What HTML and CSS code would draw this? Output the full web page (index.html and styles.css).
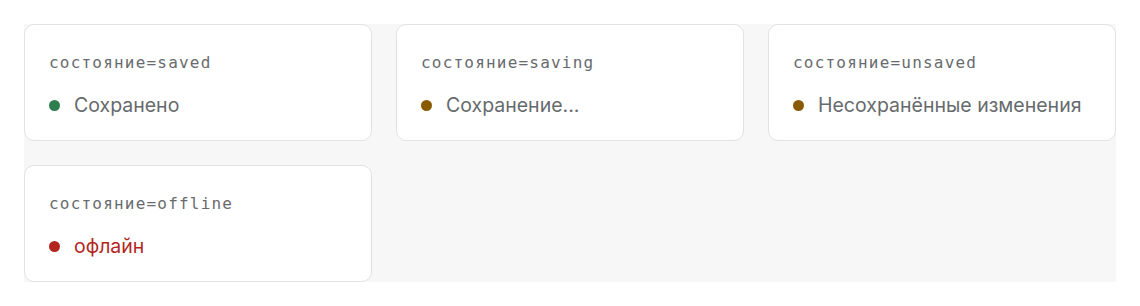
FILE: index.html
```html
<!DOCTYPE html>
<html lang="ru">
<head>
<meta charset="utf-8">
<link rel="stylesheet" href="styles.css">
</head>
<body>
<div class="grid">
  <div class="card">
    <div class="label">состояние=saved</div>
    <div class="status saved"><span class="dot"></span><span class="text">Сохранено</span></div>
  </div>
  <div class="card">
    <div class="label">состояние=saving</div>
    <div class="status saving"><span class="dot"></span><span class="text">Сохранение...</span></div>
  </div>
  <div class="card">
    <div class="label">состояние=unsaved</div>
    <div class="status unsaved"><span class="dot"></span><span class="text">Несохранённые изменения</span></div>
  </div>
  <div class="card">
    <div class="label">состояние=offline</div>
    <div class="status offline"><span class="dot"></span><span class="text">офлайн</span></div>
  </div>
</div>
</body>
</html>
```
FILE: styles.css
```css
html, body {
  margin: 0;
  background: #ffffff;
}
body {
  padding: 24px;
}
.grid {
  display: grid;
  grid-template-columns: repeat(3, 1fr);
  gap: 24px;
  background: #f7f7f7;
}
.card {
  background: #ffffff;
  border: 1px solid #e2e2e2;
  border-radius: 10px;
  padding: 25px 24px 23px;
  height: 117px;
  box-sizing: border-box;
  display: flex;
  flex-direction: column;
  gap: 17px;
}
.label {
  font-family: "DejaVu Sans Mono", monospace;
  font-size: 16px;
  letter-spacing: 0.075em;
  line-height: 26px;
  color: #686b6e;
}
.status {
  display: flex;
  align-items: center;
  gap: 14px;
  font-family: Inter, "Noto Sans", sans-serif;
  font-size: 19.5px;
  line-height: 24px;
  color: #666a6d;
}
.dot {
  width: 11px;
  height: 11px;
  border-radius: 50%;
  flex: none;
}
.saved .dot { background: #2e7d4f; }
.saving .dot, .unsaved .dot { background: #8a5a00; }
.offline .dot { background: #b3261e; }
.offline { color: #b3261e; }
```
